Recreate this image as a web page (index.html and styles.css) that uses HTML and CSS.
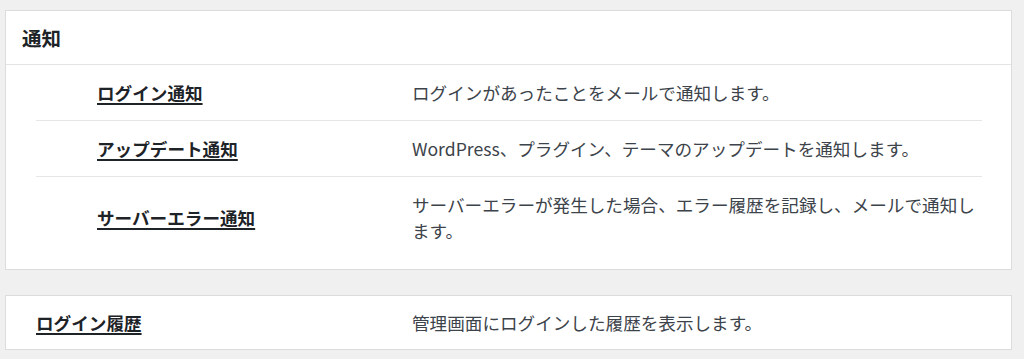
FILE: index.html
```html
<!DOCTYPE html>
<html lang="ja">
<head>
    <meta charset="UTF-8">
    <meta name="viewport" content="width=device-width, initial-scale=1.0">
    <title>通知設定</title>
    <link rel="stylesheet" href="styles.css">
</head>
<body>
    <div class="card">
        <h2 class="card-title">通知</h2>
        <table class="menu-table">
            <tr>
                <td class="label indent"><a href="#">ログイン通知</a></td>
                <td class="desc">ログインがあったことをメールで通知します。</td>
            </tr>
            <tr>
                <td class="label indent"><a href="#">アップデート通知</a></td>
                <td class="desc">WordPress、プラグイン、テーマのアップデートを通知します。</td>
            </tr>
            <tr>
                <td class="label indent"><a href="#">サーバーエラー通知</a></td>
                <td class="desc">サーバーエラーが発生した場合、エラー履歴を記録し、メールで通知します。</td>
            </tr>
        </table>
    </div>

    <div class="card">
        <table class="menu-table single">
            <tr>
                <td class="label"><a href="#">ログイン履歴</a></td>
                <td class="desc">管理画面にログインした履歴を表示します。</td>
            </tr>
        </table>
    </div>
</body>
</html>
```

FILE: styles.css
```css
* {
    box-sizing: border-box;
}

body {
    margin: 0;
    padding: 10px 12px 0 5px;
    background-color: #f0f0f0;
    font-family: "Noto Sans CJK JP", "Noto Sans", sans-serif;
    color: #3c434a;
}

.card {
    background-color: #fff;
    border: 1px solid #dcdcde;
    margin-bottom: 25px;
}

.card-title {
    margin: 0;
    padding: 14px 16px 13px 16px;
    font-size: 19.5px;
    line-height: 26px;
    font-weight: bold;
    color: #1d2327;
    border-bottom: 1px solid #e4e4e4;
}

.menu-table {
    width: calc(100% - 59px);
    margin: 0 29px 11px 30px;
    border-collapse: collapse;
    font-size: 17.6px;
    line-height: 26px;
}

.menu-table tr {
    border-bottom: 1px solid #e6e6e6;
}

.menu-table tr:last-child {
    border-bottom: none;
}

.menu-table td {
    padding: 14.5px 0;
    vertical-align: middle;
}

.menu-table .label {
    width: 376px;
}

.menu-table .indent {
    padding-left: 61px;
}

.menu-table .label a {
    color: #1d2327;
    font-weight: bold;
    text-decoration: underline;
    text-decoration-thickness: 2px;
    text-underline-offset: 3px;
}

.menu-table .desc {
    color: #3c434a;
}

.menu-table.single {
    margin-bottom: 0;
}

.menu-table.single td {
    padding: 14px 0 13px;
}
```
